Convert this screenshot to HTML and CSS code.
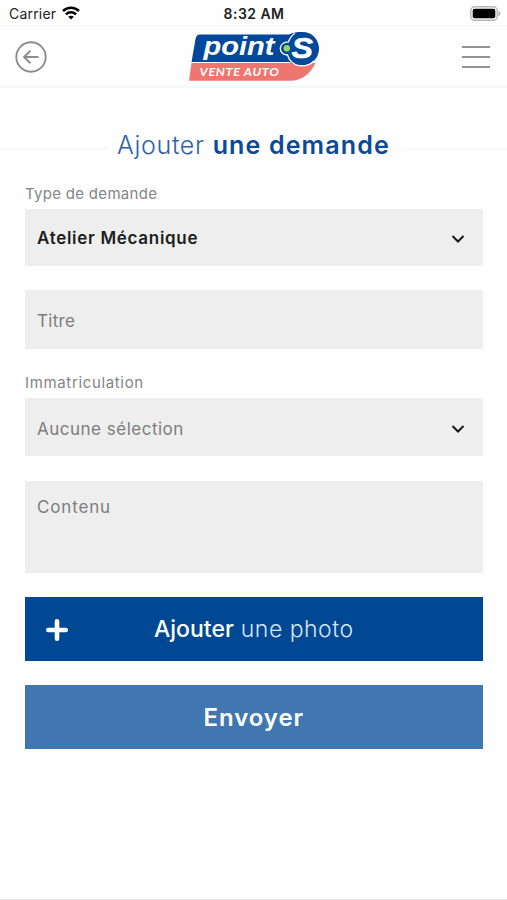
FILE: index.html
```html
<!DOCTYPE html>
<html lang="fr">
<head>
<meta charset="utf-8">
<title>Ajouter une demande</title>
<link rel="stylesheet" href="styles.css">
</head>
<body>
<div class="status">
  <div class="carrier"><span class="carrier-name">Carrier</span>
    <svg width="18" height="14" viewBox="0 0 18 14" fill="none" stroke="#000" stroke-width="2.5"><path d="M1 5C5.6.7 12.400.7 17 5"/><path d="M3.900 8.300c2.900-2.700 7.300-2.700 10.200 0"/><path d="M9 13.600 6.200 10.800c1.600-1.500 4-1.500 5.600 0z" fill="#000" stroke="none"/></svg>
  </div>
  <span class="clock">8:32 AM</span>
  <svg class="battery" width="31" height="15" viewBox="0 0 31 15"><rect x=".8" y=".8" width="26.400" height="13.400" rx="4" fill="#fff" stroke="#b5b5b5" stroke-width="1.400"/><rect x="2.700" y="2.700" width="22.600" height="9.600" rx="2"/><path d="M28.500 5c2.400.6 2.400 4.400 0 5z" fill="#a5a5a5"/></svg>
</div>
<header class="topbar">
  <svg width="32" height="32" viewBox="0 0 32 32" fill="none" stroke="#8c8c8c" stroke-width="1.900"><circle cx="16" cy="16" r="14.700"/><path d="M23.500 16H9.200M15.500 9.800 9 16l6.500 6.200" stroke-linejoin="round"/></svg>
  <svg class="logo" width="132" height="52" viewBox="0 0 132 52">
    <path d="M3.500 32H127.500C122 43 114 49.700 102 49.700H1z" fill="#ee766f"/>
    <path d="M12 3.500H101C105 1.500 109 1 114.500 1C124 1 131 8.500 131 17.500C131 27 124 34.300 114.500 34.300C109 34.300 105 33.500 102 31.200H3.500L7.500 8Q8.300 3.500 12 3.500z" fill="#03489a"/>
    <path d="M3.500 31.500H101.500" fill="none" stroke="#fff" stroke-width="1.200"/>
    <path d="M107 2.300C104 4 102 7 100.500 10.800C90 11 89.500 23.500 99.500 24C101 29.500 106 34.800 114 34.900C119 34.900 123 33 126 30" fill="none" stroke="#fff" stroke-width="1.300"/>
    <circle cx="98.800" cy="17.300" r="3.200" fill="#94d95e"/>
    <text x="15.500" y="24" class="logo-point" textLength="71" lengthAdjust="spacingAndGlyphs">point</text>
    <text x="103.500" y="27.300" class="logo-s" textLength="21.500" lengthAdjust="spacingAndGlyphs">S</text>
    <text x="11.500" y="45.300" class="logo-sub" textLength="80" lengthAdjust="spacingAndGlyphs">VENTE AUTO</text>
  </svg>
  <svg width="28" height="24" viewBox="0 0 28 24" stroke="#929292" stroke-width="2"><path d="M0 2h28M0 12h28M0 22h28"/></svg>
</header>
<main>
  <h1 class="title"><span class="title-light">Ajouter</span><strong class="title-bold">une demande</strong></h1>
  <form class="form">
    <div class="label label-type">Type de demande</div>
    <div class="field select"><span class="value">Atelier Mécanique</span><svg width="14" height="10" viewBox="0 0 14 10" fill="none" stroke="#171717" stroke-width="2"><path d="m1.500 2 5.500 5.500L12.500 2"/></svg></div>
    <div class="field input"><span class="ph-title">Titre</span></div>
    <div class="label label-plate">Immatriculation</div>
    <div class="field select plate"><span class="ph-plate">Aucune sélection</span><svg width="14" height="10" viewBox="0 0 14 10" fill="none" stroke="#171717" stroke-width="2"><path d="m1.500 2 5.500 5.500L12.500 2"/></svg></div>
    <div class="field area"><span class="ph-body">Contenu</span></div>
    <div class="button photo"><svg class="plus" width="22" height="22" viewBox="0 0 22 22" stroke="#fff" stroke-width="4.600" stroke-linecap="round"><path d="M11 2.300v17.400M2.300 11h17.400"/></svg><span class="photo-bold">Ajouter</span><span class="photo-light">une photo</span></div>
    <div class="button send"><span>Envoyer</span></div>
  </form>
</main>
</body>
</html>
```
FILE: styles.css
```css
* { box-sizing: border-box; }
body { margin: 0; height: 900px; overflow: hidden; display: flex; flex-direction: column; background: #fefefe; border-bottom: 1px solid #e4e4e4; font-family: Inter, "Open Sans", sans-serif; }
.status { height: 26px; flex: none; display: grid; grid-template-columns: 1fr auto 1fr; align-items: center; padding: 2px 6px 0 9px; border-bottom: 1px solid #f2f2f2; font-size: 14px; color: #222; }
.carrier { display: flex; align-items: center; gap: 6px; }
.carrier-name { letter-spacing: .2px; }
.carrier svg { margin-top: -2px; }
.clock { font-weight: 600; letter-spacing: .45px; margin-left: -2px; }
.battery { justify-self: end; }
.topbar { height: 62px; flex: none; display: flex; align-items: center; justify-content: space-between; padding: 1px 17px 0 15px; border-bottom: 2px solid #f6f6f6; }
.logo { overflow: visible; margin-right: 1px; }
.logo-point { font: italic 700 26px "Liberation Sans", sans-serif; fill: #fff; }
.logo-s { font: italic 700 29px "Liberation Sans", sans-serif; fill: #fff; stroke: #fff; stroke-width: .5; }
.logo-sub { font: italic 700 11.500px Lato, sans-serif; letter-spacing: .6px; fill: #fff; }
.title { margin: 40px 0 0; height: 34px; display: flex; align-items: center; justify-content: center; gap: 8px; font-size: 25px; line-height: 34px; font-weight: 300; color: #0b4a97; }
.title::before, .title::after { content: ""; flex: 1; height: 3px; margin-top: 6px; background: #f9f9f9; }
.title-light { letter-spacing: .65px; color: #2c62a6; }
.title-bold { font-weight: 600; letter-spacing: 1.150px; }
.form { padding: 0 24.500px 0 25px; }
.label { height: 20px; line-height: 20px; font-size: 15px; color: #858585; }
.label-type { margin-top: 22px; margin-bottom: 5px; letter-spacing: .3px; }
.label-plate { margin-top: 24px; margin-bottom: 5px; letter-spacing: .65px; }
.field { background: #eee; border-radius: 1px; display: flex; align-items: center; justify-content: space-between; padding: 2px 17.500px 0 12px; font-size: 17px; color: #7d7d7d; }
.select { height: 57px; }
.input { height: 59px; margin-top: 24px; }
.plate { height: 58px; padding-top: 3px; }
.area { height: 92px; margin-top: 25px; align-items: flex-start; padding-top: 15px; line-height: 22px; }
.value { font-weight: 600; color: #1d1d1d; letter-spacing: .7px; margin-top: -1px; }
.ph-title { letter-spacing: .3px; }
.ph-plate { letter-spacing: .5px; }
.ph-body { letter-spacing: .85px; }
.button { height: 64px; margin-top: 24px; color: #fff; font-size: 23px; display: flex; align-items: center; justify-content: center; position: relative; }
.photo { background: #004893; gap: 7px; }
.photo-bold { font-weight: 500; }
.photo-light { font-weight: 300; letter-spacing: .5px; color: #d6e5f5; }
.plus { position: absolute; left: 21px; top: 22px; }
.send { background: #4177b0; font-size: 24px; font-weight: 600; letter-spacing: .9px; }
```
